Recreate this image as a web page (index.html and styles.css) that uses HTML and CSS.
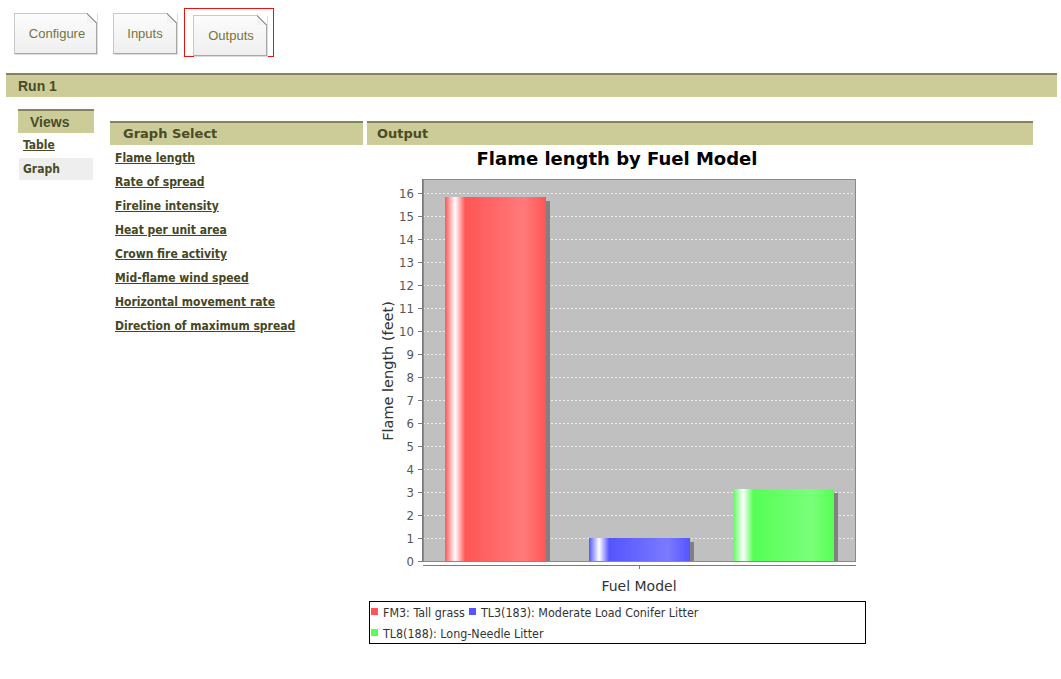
FILE: index.html
```html
<!DOCTYPE html>
<html>
<head>
<meta charset="utf-8">
<title>Run 1 - Outputs</title>
<link rel="stylesheet" href="styles.css">
</head>
<body>
<div class="tabs">
  <div class="tab tab-configure">Configure</div>
  <div class="tab tab-inputs">Inputs</div>
  <div class="tab-active-frame"><div class="tab tab-outputs">Outputs</div></div>
</div>
<div class="run-bar">Run 1</div>
<div class="main">
  <div class="views">
    <div class="section-head views-head">Views</div>
    <a class="view-link" href="#">Table</a>
    <div class="view-current">Graph</div>
  </div>
  <div class="graph-select">
    <div class="section-head select-head">Graph Select</div>
    <ul class="graph-links">
      <li><a href="#">Flame length</a></li>
      <li><a href="#">Rate of spread</a></li>
      <li><a href="#">Fireline intensity</a></li>
      <li><a href="#">Heat per unit area</a></li>
      <li><a href="#">Crown fire activity</a></li>
      <li><a href="#">Mid-flame wind speed</a></li>
      <li><a href="#">Horizontal movement rate</a></li>
      <li><a href="#">Direction of maximum spread</a></li>
    </ul>
  </div>
  <div class="output">
    <div class="section-head output-head">Output</div>
    <svg class="chart" width="666" height="505" viewBox="0 0 666 505" xmlns="http://www.w3.org/2000/svg">
      <defs>
        <linearGradient id="gRed" x1="0" x2="1" y1="0" y2="0">
          <stop offset="0" stop-color="#ff5555"/>
          <stop offset="0.10" stop-color="#ffffff"/>
          <stop offset="0.20" stop-color="#ff5555"/>
          <stop offset="0.78" stop-color="#ff7a7a"/>
          <stop offset="1" stop-color="#ff5555"/>
        </linearGradient>
        <linearGradient id="gBlue" x1="0" x2="1" y1="0" y2="0">
          <stop offset="0" stop-color="#5555ff"/>
          <stop offset="0.10" stop-color="#ffffff"/>
          <stop offset="0.20" stop-color="#5555ff"/>
          <stop offset="0.78" stop-color="#7a7aff"/>
          <stop offset="1" stop-color="#5555ff"/>
        </linearGradient>
        <linearGradient id="gGreen" x1="0" x2="1" y1="0" y2="0">
          <stop offset="0" stop-color="#55ff55"/>
          <stop offset="0.10" stop-color="#ffffff"/>
          <stop offset="0.20" stop-color="#55ff55"/>
          <stop offset="0.78" stop-color="#7aff7a"/>
          <stop offset="1" stop-color="#55ff55"/>
        </linearGradient>
        <clipPath id="plotClip"><rect x="56" y="34" width="433" height="383"/></clipPath>
      </defs>

      <text class="chart-title" x="250" y="20" text-anchor="middle">Flame length by Fuel Model</text>

      <rect x="56" y="34" width="433" height="383" fill="#c0c0c0"/>
      <g class="grid" stroke="#ececec" stroke-width="1" stroke-dasharray="2 2">
        <line x1="56" x2="489" y1="393.5" y2="393.5"/>
        <line x1="56" x2="489" y1="370.5" y2="370.5"/>
        <line x1="56" x2="489" y1="347.5" y2="347.5"/>
        <line x1="56" x2="489" y1="324.5" y2="324.5"/>
        <line x1="56" x2="489" y1="301.5" y2="301.5"/>
        <line x1="56" x2="489" y1="278.5" y2="278.5"/>
        <line x1="56" x2="489" y1="255.5" y2="255.5"/>
        <line x1="56" x2="489" y1="232.5" y2="232.5"/>
        <line x1="56" x2="489" y1="209.5" y2="209.5"/>
        <line x1="56" x2="489" y1="186.5" y2="186.5"/>
        <line x1="56" x2="489" y1="163.5" y2="163.5"/>
        <line x1="56" x2="489" y1="140.5" y2="140.5"/>
        <line x1="56" x2="489" y1="117.5" y2="117.5"/>
        <line x1="56" x2="489" y1="94.5" y2="94.5"/>
        <line x1="56" x2="489" y1="71.5" y2="71.5"/>
        <line x1="56" x2="489" y1="48.5" y2="48.5"/>
      </g>

      <g clip-path="url(#plotClip)" fill="#808080">
        <rect x="82" y="56" width="101" height="365"/>
        <rect x="226" y="397" width="101" height="24"/>
        <rect x="370" y="348" width="101" height="73"/>
      </g>
      <rect x="78" y="52" width="101" height="365" fill="url(#gRed)"/>
      <rect x="222" y="393" width="101" height="24" fill="url(#gBlue)"/>
      <rect x="366" y="344" width="101" height="73" fill="url(#gGreen)"/>

      <rect x="56.5" y="34.5" width="432" height="382" fill="none" stroke="#8a8a8a"/>
      <line x1="55.5" x2="55.5" y1="34" y2="417" stroke="#7a7a7a"/>

      <g stroke="#7a7a7a">
        <line x1="51" x2="55" y1="416.5" y2="416.5"/>
        <line x1="51" x2="55" y1="393.5" y2="393.5"/>
        <line x1="51" x2="55" y1="370.5" y2="370.5"/>
        <line x1="51" x2="55" y1="347.5" y2="347.5"/>
        <line x1="51" x2="55" y1="324.5" y2="324.5"/>
        <line x1="51" x2="55" y1="301.5" y2="301.5"/>
        <line x1="51" x2="55" y1="278.5" y2="278.5"/>
        <line x1="51" x2="55" y1="255.5" y2="255.5"/>
        <line x1="51" x2="55" y1="232.5" y2="232.5"/>
        <line x1="51" x2="55" y1="209.5" y2="209.5"/>
        <line x1="51" x2="55" y1="186.5" y2="186.5"/>
        <line x1="51" x2="55" y1="163.5" y2="163.5"/>
        <line x1="51" x2="55" y1="140.5" y2="140.5"/>
        <line x1="51" x2="55" y1="117.5" y2="117.5"/>
        <line x1="51" x2="55" y1="94.5" y2="94.5"/>
        <line x1="51" x2="55" y1="71.5" y2="71.5"/>
        <line x1="51" x2="55" y1="48.5" y2="48.5"/>
      </g>
      <g class="tick-labels" text-anchor="end">
        <text x="47" y="421">0</text>
        <text x="47" y="398">1</text>
        <text x="47" y="375">2</text>
        <text x="47" y="352">3</text>
        <text x="47" y="329">4</text>
        <text x="47" y="306">5</text>
        <text x="47" y="283">6</text>
        <text x="47" y="260">7</text>
        <text x="47" y="237">8</text>
        <text x="47" y="214">9</text>
        <text x="47" y="191">10</text>
        <text x="47" y="168">11</text>
        <text x="47" y="145">12</text>
        <text x="47" y="122">13</text>
        <text x="47" y="99">14</text>
        <text x="47" y="76">15</text>
        <text x="47" y="53">16</text>
      </g>
      <text class="axis-label y-label" transform="translate(26 226) rotate(-90)" text-anchor="middle">Flame length (feet)</text>

      <line x1="56" x2="489" y1="420.5" y2="420.5" stroke="#7a7a7a"/>
      <line x1="272.5" x2="272.5" y1="420" y2="424" stroke="#7a7a7a"/>
      <text class="axis-label" x="272" y="446" text-anchor="middle">Fuel Model</text>

      <rect x="2.5" y="456.5" width="496" height="42" fill="#ffffff" stroke="#000000"/>
      <rect x="4" y="463" width="7" height="7" fill="#ff5555"/>
      <text class="legend-text" x="16" y="472">FM3: Tall grass</text>
      <rect x="102" y="463" width="7" height="7" fill="#5555ff"/>
      <text class="legend-text" x="114" y="472">TL3(183): Moderate Load Conifer Litter</text>
      <rect x="4" y="484" width="7" height="7" fill="#55ff55"/>
      <text class="legend-text" x="16" y="493">TL8(188): Long-Needle Litter</text>
    </svg>
  </div>
</div>
</body>
</html>
```

FILE: styles.css
```css
body {
  margin: 0;
  background: #ffffff;
  font-family: "DejaVu Sans Condensed", "DejaVu Sans", sans-serif;
  color: #4b4b26;
}

.tabs {
  display: flex;
  align-items: flex-start;
  padding: 8px 0 0 14px;
}

.tab {
  position: relative;
  box-sizing: border-box;
  height: 41px;
  display: flex;
  align-items: center;
  justify-content: center;
  font-family: "Liberation Sans", Arial, sans-serif;
  font-size: 13px;
  color: #74743a;
  background: linear-gradient(to bottom, #fcfcfc, #efefef);
  border: 1px solid #c8c8c8;
  border-right-color: #a8a8a8;
  border-bottom-color: #a8a8a8;
  box-shadow: 1px 1px 0 #dcdcdc;
}

.tab::after {
  content: "";
  position: absolute;
  top: -1px;
  right: -1px;
  width: 10px;
  height: 10px;
  background: linear-gradient(to bottom left, #ffffff 0 46%, #a0a0a0 46% 56%, #f2f2f2 56%);
}

.tab-configure {
  width: 83px;
  margin-top: 5px;
  padding-left: 3px;
}

.tab-inputs {
  width: 64px;
  margin-top: 5px;
  margin-left: 16px;
}

.tab-active-frame {
  margin-left: 7px;
  border: 1px solid #ee1111;
  padding: 6px 6px 0 8px;
}

.tab-outputs {
  width: 74px;
  padding-left: 2px;
}

.run-bar {
  margin: 16px 4px 0 6px;
  height: 22px;
  line-height: 22px;
  border-top: 2px solid #83835e;
  background: #cccc99;
  padding-left: 12px;
  font-family: "Liberation Sans", Arial, sans-serif;
  font-weight: bold;
  font-size: 14px;
  color: #4b4b26;
}

.main {
  display: flex;
  align-items: flex-start;
  padding-left: 18px;
  margin-top: 12px;
}

.section-head {
  box-sizing: border-box;
  height: 24px;
  line-height: 22px;
  border-top: 2px solid #83835e;
  background: #cccc99;
  font-family: "DejaVu Sans", sans-serif;
  font-weight: bold;
  font-size: 13px;
  color: #4b4b26;
}

.views {
  width: 76px;
  display: flex;
  flex-direction: column;
}

.views-head {
  height: 24px;
  padding-left: 12px;
  font-family: "Liberation Sans", Arial, sans-serif;
  font-size: 14px;
}

.view-link {
  height: 24px;
  line-height: 24px;
  padding-left: 5px;
  font-weight: bold;
  font-size: 12px;
  color: #4b4b26;
}

.view-current {
  margin: 1px 1px 0;
  height: 22px;
  line-height: 22px;
  padding-left: 4px;
  background: #eeeeee;
  font-weight: bold;
  font-size: 12px;
  color: #4b4b26;
}

.graph-select {
  width: 253px;
  margin-left: 16px;
  margin-top: 12px;
}

.select-head {
  padding-left: 13px;
}

.graph-links {
  list-style: none;
  margin: 0;
  padding: 0 0 0 5px;
}

.graph-links li {
  height: 24px;
  line-height: 24px;
}

.graph-links a {
  font-weight: bold;
  font-size: 12px;
  color: #46461f;
}

.output {
  width: 666px;
  margin-left: 4px;
  margin-top: 12px;
}

.output-head {
  padding-left: 10px;
}

.chart {
  display: block;
}

.chart text {
  font-family: "DejaVu Sans Condensed", "DejaVu Sans", sans-serif;
  fill: #444444;
}

.chart .chart-title {
  font-family: "DejaVu Sans", sans-serif;
  font-size: 18px;
  font-weight: bold;
  fill: #000000;
}

.chart .tick-labels text {
  font-size: 13px;
  fill: #555555;
}

.chart .axis-label {
  font-family: "DejaVu Sans", sans-serif;
  font-size: 14px;
  fill: #333333;
}

.chart .y-label {
  font-size: 14.5px;
}

.chart .legend-text {
  font-size: 12.4px;
  fill: #333333;
}
```
